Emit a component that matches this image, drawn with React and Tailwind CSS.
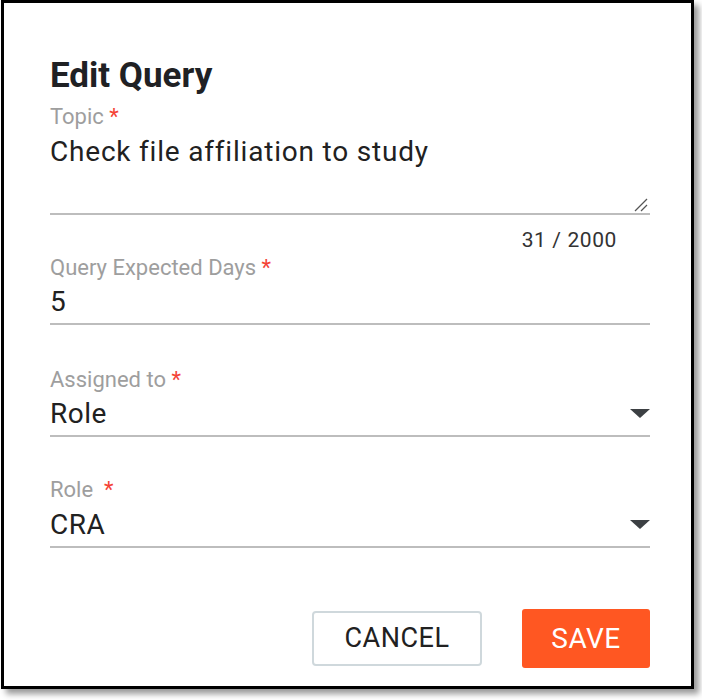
import React from "react";

const font = { fontFamily: "Roboto, 'Noto Sans', Arial, sans-serif" };

function Label({ children, gap = 1 }) {
  return (
    <div className="h-[24px] leading-[24px] text-[22px] text-[#9e9e9e]">
      {children}
      <span className="text-[#f44336]">{gap === 2 ? "\u00a0\u00a0*" : "\u00a0*"}</span>
    </div>
  );
}

function Arrow() {
  return (
    <svg width="20" height="10" viewBox="0 0 20 10" className="shrink-0">
      <polygon points="0,0 20,0 10,9" fill="#3c4043" />
    </svg>
  );
}

export default function App() {
  return (
    <div className="w-[702px] h-[700px] bg-white" style={font}>
      <div className="ml-[1px] w-[693px] h-[689px] border-[3px] border-black bg-white shadow-[5px_5px_6px_rgba(0,0,0,0.4)] pl-[46px] pr-[41px] pt-[55px] flex flex-col">
        <div className="h-[36px] leading-[36px] text-[35px] font-bold text-[#202124]">Edit Query</div>

        <div className="mt-[11px]">
          <Label>Topic</Label>
        </div>
        <div className="relative h-[86px] pt-[5px] border-b-[2px] border-[#bdbdbd]">
          <div className="leading-[36px] text-[28px] text-[#212121] tracking-[0.8px]">Check file affiliation to study</div>
          <svg width="14" height="14" viewBox="0 0 14 14" className="absolute right-[2px] bottom-[1px]">
            <line x1="1" y1="13" x2="13" y2="1" stroke="#555" strokeWidth="1.3" />
            <line x1="7" y1="13" x2="13" y2="7" stroke="#555" strokeWidth="1.3" />
          </svg>
        </div>
        <div className="mt-[13px] h-[24px] leading-[24px] text-[21px] text-[#333] text-right pr-[33px] tracking-[0.6px]">31 / 2000</div>

        <div className="mt-[4px]">
          <Label>Query Expected Days</Label>
        </div>
        <div className="pt-[4px] pb-[3px] border-b-[2px] border-[#bdbdbd]">
          <div className="leading-[36px] text-[28px] text-[#212121]">5</div>
        </div>

        <div className="mt-[43px]">
          <Label>Assigned to</Label>
        </div>
        <div className="pt-[4px] pb-[3px] border-b-[2px] border-[#bdbdbd] flex items-center justify-between">
          <div className="leading-[36px] text-[28px] text-[#212121] tracking-[0.5px]">Role</div>
          <Arrow />
        </div>

        <div className="mt-[41px]">
          <Label gap={2}>Role</Label>
        </div>
        <div className="pt-[5px] pb-[3px] border-b-[2px] border-[#bdbdbd] flex items-center justify-between">
          <div className="leading-[36px] text-[28px] text-[#212121] tracking-[0.5px]">CRA</div>
          <Arrow />
        </div>

        <div className="mt-[61px] flex justify-end items-center gap-[40px]">
          <button className="w-[170px] h-[55px] border-[2px] border-[#cfd8dc] rounded-[4px] bg-white text-[27px] text-[#212121] tracking-[0.5px]">CANCEL</button>
          <button className="w-[128px] h-[59px] rounded-[3px] bg-[#ff5722] text-white text-[28px] tracking-[0.5px]">SAVE</button>
        </div>
      </div>
    </div>
  );
}
